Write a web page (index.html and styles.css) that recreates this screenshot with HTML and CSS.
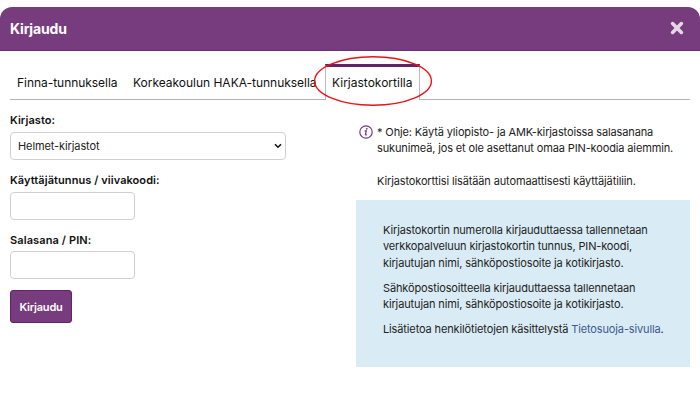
FILE: index.html
```html
<!DOCTYPE html>
<html lang="fi">
<head>
<meta charset="utf-8">
<title>Kirjaudu</title>
<link rel="stylesheet" href="styles.css">
</head>
<body>
<div class="modal">
  <header class="modal-header">
    <h1 class="title">Kirjaudu</h1>
    <button class="close" type="button" aria-label="Sulje"><svg width="14" height="14" viewBox="0 0 14 14"><path d="M2.6 2.6L11.4 11.4M11.4 2.6L2.6 11.4"/></svg></button>
  </header>
  <nav class="tabs">
    <a class="tab first">Finna-tunnuksella</a>
    <a class="tab second">Korkeakoulun HAKA-tunnuksella</a>
    <a class="tab active">Kirjastokortilla
      <svg class="ring" width="120" height="54" viewBox="0 0 120 54"><ellipse cx="60" cy="27" rx="58.4" ry="24.2"/></svg>
    </a>
    <span class="tab-fill"></span>
  </nav>
  <main class="content">
    <form class="login">
      <label for="library">Kirjasto:</label>
      <div class="select" id="library"><span>Helmet-kirjastot</span><svg width="8" height="6" viewBox="0 0 8 6"><path d="M1 1.2L4 4.2L7 1.2"/></svg></div>
      <label for="user">Käyttäjätunnus / viivakoodi:</label>
      <input id="user" type="text">
      <label class="pin-label" for="pin">Salasana / PIN:</label>
      <input id="pin" type="password">
      <button class="submit" type="button">Kirjaudu</button>
    </form>
    <aside class="info">
      <div class="help">
        <svg class="info-icon" width="14" height="14" viewBox="0 0 14 14"><circle cx="7" cy="7" r="6.2"/><path d="M5.6 6.1L7.3 5.7L6.4 9.6Q6.4 10.3 7.8 9.6"/><circle class="dot" cx="7.8" cy="3.8" r=".9"/></svg>
        <div>
          <p>* Ohje: Käytä yliopisto- ja AMK-kirjastoissa salasanana<br>sukunimeä, jos et ole asettanut omaa PIN-koodia aiemmin.</p>
          <p class="note">Kirjastokorttisi lisätään automaattisesti käyttäjätiliin.</p>
        </div>
      </div>
      <div class="notice">
        <p>Kirjastokortin numerolla kirjauduttaessa tallennetaan<br>verkkopalveluun kirjastokortin tunnus, PIN-koodi,<br>kirjautujan nimi, sähköpostiosoite ja kotikirjasto.</p>
        <p>Sähköpostiosoitteella kirjauduttaessa tallennetaan<br>kirjautujan nimi, sähköpostiosoite ja kotikirjasto.</p>
        <p>Lisätietoa henkilötietojen käsittelystä <a class="link">Tietosuoja-sivulla</a>.</p>
      </div>
    </aside>
  </main>
</div>
</body>
</html>
```
FILE: styles.css
```css
* { box-sizing: border-box; }
body {
  margin: 0;
  background: #fff;
  color: #222;
  font: 11px/16.4px Inter, "Liberation Sans", sans-serif;
}
p, h1 { margin: 0; }
.modal { padding-top: 7px; }
.modal-header {
  display: flex;
  align-items: center;
  justify-content: space-between;
  height: 44px;
  padding: 0 16px 0 10px;
  border-bottom: 1px solid #6a2d70;
  border-radius: 12px 12px 0 0;
  background: #773c7d;
}
.title { font-size: 14px; line-height: 20px; font-weight: 700; color: #fff; letter-spacing: -.17px; }
.close { display: flex; margin-top: -2px; padding: 0; border: 0; background: none; }
.close svg { fill: none; stroke: #e4d8e5; stroke-width: 3.6; stroke-linecap: round; }
.tabs {
  display: flex;
  height: 36px;
  margin: 13px 10px 0;
  white-space: nowrap;
}
.tab {
  padding-top: 11px;
  border-bottom: 1px solid #b4b4b4;
  font-size: 12px;
  color: #111;
}
.first { width: 116px; padding-left: 7px; letter-spacing: -.04px; }
.second { width: 199px; padding-left: 7px; letter-spacing: -.02px; }
.active {
  position: relative;
  width: 95px;
  padding: 8px 0 0 6px;
  border: 1px solid #bbb;
  border-top: 3px solid #622367;
  border-bottom: 0;
}
.ring { position: absolute; left: -13px; top: -13px; fill: none; stroke: #f01118; stroke-width: 1.4; }
.tab-fill { flex: 1; border-bottom: 1px solid #b4b4b4; }
.content { display: flex; justify-content: space-between; padding: 12px 10px 0; }
.login { display: flex; flex-direction: column; align-items: flex-start; width: 276px; }
label { height: 20px; font-weight: 600; letter-spacing: .07px; color: #111; }
.pin-label { padding-top: .6px; letter-spacing: .11px; }
.select {
  display: flex;
  align-items: center;
  justify-content: space-between;
  width: 276px;
  height: 28px;
  margin-bottom: 11.5px;
  padding: 0 3px 0 7px;
  border: 1px solid #d0d0d0;
  border-radius: 4px;
  letter-spacing: -.1px;
}
.select svg { fill: none; stroke: #111; stroke-width: 1.6; }
input {
  width: 125px;
  height: 28px;
  margin-bottom: 11.5px;
  border: 1px solid #d0d0d0;
  border-radius: 4px;
  background: #fff;
}
.submit {
  width: 62px;
  height: 33px;
  margin-top: -1px;
  padding: 2px 0 0;
  border: 1px solid #622367;
  border-radius: 3px;
  background: #773c7d;
  color: #fff;
  font: 600 11px/16px Inter, "Liberation Sans", sans-serif;
  letter-spacing: -.2px;
}
.info { width: 334px; white-space: nowrap; letter-spacing: -.13px; }
.help { display: flex; height: 88px; padding: 12px 0 0 3px; }
.info-icon { flex: none; margin: 1px 4px 0 0; fill: none; stroke: #773c7d; stroke-width: 1.2; }
.info-icon .dot { fill: #773c7d; stroke: none; }
.note { margin-top: 16px; }
.notice { height: 167px; padding: 22px 27px; background: #d9ecf6; }
.notice p { margin-bottom: 8.5px; }
.link { color: #40568d; }
```
